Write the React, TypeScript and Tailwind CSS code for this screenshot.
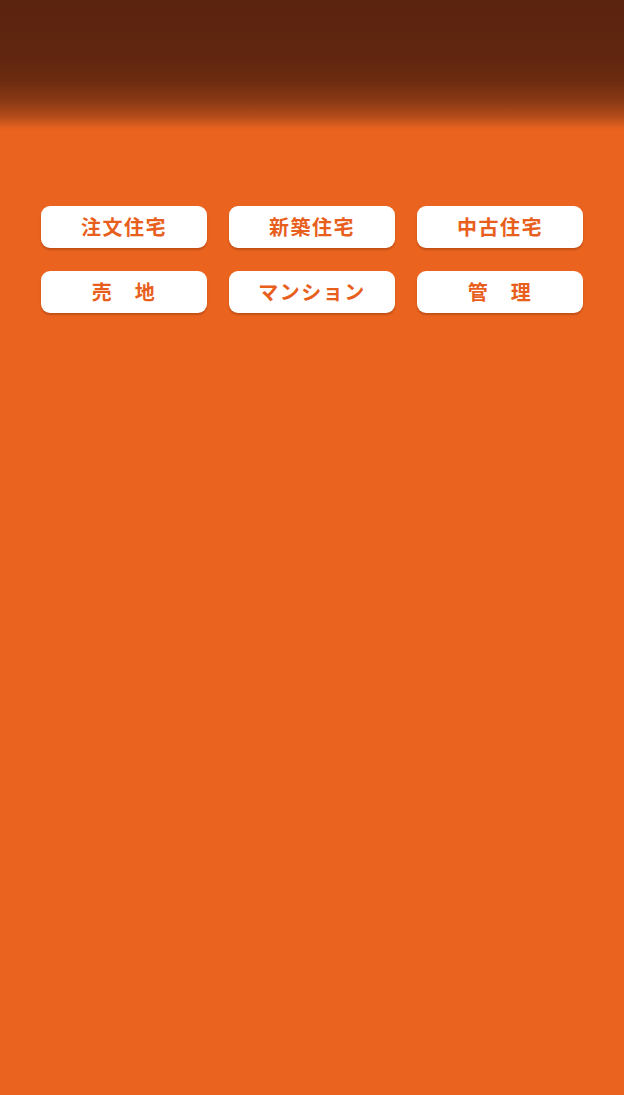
import React from 'react'

const items = ['注文住宅', '新築住宅', '中古住宅', '売　地', 'マンション', '管　理']

export default function App() {
  return (
    <div className="min-h-[1095px] w-full bg-[#ea641f] font-['Noto_Sans_CJK_JP',sans-serif]">
      <header className="h-[130px] bg-[linear-gradient(to_bottom,#5b240e_0%,#602610_45%,#6c2b10_62%,#8a3a15_78%,#b54c1a_90%,#e2601f_98%,#ea641f_100%)]" />
      <main className="px-[41px] pt-[76px]">
        <div className="grid grid-cols-3 gap-x-[22px] gap-y-[23px]">
          {items.map((t) => (
            <button
              key={t}
              className="h-[42px] rounded-[9px] bg-white text-[#e85f1d] text-[20px] font-bold tracking-[1.5px] shadow-[0_2px_2px_rgba(120,40,0,0.35)]"
            >
              {t}
            </button>
          ))}
        </div>
      </main>
    </div>
  )
}
